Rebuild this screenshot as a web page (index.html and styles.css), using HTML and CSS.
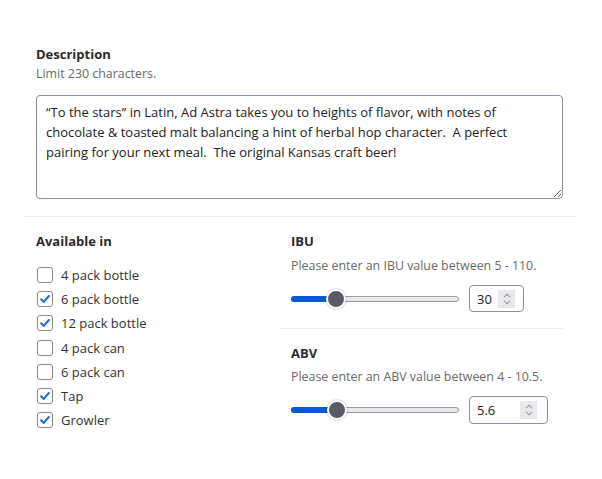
FILE: index.html
```html
<!DOCTYPE html>
<html lang="en">
<head>
<meta charset="utf-8">
<title>Beer details</title>
<link rel="stylesheet" href="styles.css">
</head>
<body>
<div class="form">
  <section class="desc">
    <div class="label">Description</div>
    <div class="help">Limit 230 characters.</div>
    <textarea class="textarea">“To the stars” in Latin, Ad Astra takes you to heights of flavor, with notes of chocolate &amp; toasted malt balancing a hint of herbal hop character.  A perfect pairing for your next meal.  The original Kansas craft beer!</textarea>
  </section>
  <div class="cols">
    <section class="avail">
      <div class="label">Available in</div>
      <ul class="checks">
        <li class="check"><span class="box"></span>4 pack bottle</li>
        <li class="check on"><span class="box"><svg viewBox="0 0 16 16"><path d="M3.6 8.4 L6.6 11.3 L12.4 4.6"/></svg></span>6 pack bottle</li>
        <li class="check on"><span class="box"><svg viewBox="0 0 16 16"><path d="M3.6 8.4 L6.6 11.3 L12.4 4.6"/></svg></span>12 pack bottle</li>
        <li class="check"><span class="box"></span>4 pack can</li>
        <li class="check"><span class="box"></span>6 pack can</li>
        <li class="check on"><span class="box"><svg viewBox="0 0 16 16"><path d="M3.6 8.4 L6.6 11.3 L12.4 4.6"/></svg></span>Tap</li>
        <li class="check on"><span class="box"><svg viewBox="0 0 16 16"><path d="M3.6 8.4 L6.6 11.3 L12.4 4.6"/></svg></span>Growler</li>
      </ul>
    </section>
    <div class="right">
      <section class="range first">
        <div class="label">IBU</div>
        <div class="help gap">Please enter an IBU value between 5 - 110.</div>
        <div class="row">
          <div class="slider">
            <div class="track"></div>
            <div class="fill" style="width: 45px"></div>
            <div class="thumb" style="left: 45px"></div>
          </div>
          <div class="num small"><span class="val">30</span><span class="spin"><svg viewBox="0 0 16 18"><path d="M4.5 7 L8 3.5 L11.5 7 M4.5 11 L8 14.5 L11.5 11"/></svg></span></div>
        </div>
      </section>
      <section class="range">
        <div class="label">ABV</div>
        <div class="help gap2">Please enter an ABV value between 4 - 10.5.</div>
        <div class="row row2">
          <div class="slider">
            <div class="track"></div>
            <div class="fill" style="width: 46px"></div>
            <div class="thumb" style="left: 46px"></div>
          </div>
          <div class="num wide"><span class="val">5.6</span><span class="spin"><svg viewBox="0 0 16 18"><path d="M4.5 7 L8 3.5 L11.5 7 M4.5 11 L8 14.5 L11.5 11"/></svg></span></div>
        </div>
      </section>
    </div>
  </div>
</div>
</body>
</html>
```
FILE: styles.css
```css
* { box-sizing: border-box; }
html, body { margin: 0; padding: 0; background: #fff; }
body {
  font-family: "Open Sans", "Noto Sans", "Liberation Sans", sans-serif;
  color: #333;
  font-size: 13px;
}
.form { margin-left: 24px; width: 551px; }
.desc {
  padding: 44px 12px 17px;
  border-bottom: 1px solid #ececec;
}
.label { font-size: 13px; font-weight: 700; line-height: 20px; color: #2b2b2b; }
.help { font-size: 12.4px; line-height: 20px; color: #6a6a6a; }
.textarea {
  display: block;
  margin-top: 11px;
  width: 527px;
  height: 104px;
  border: 1px solid #8f8f9d;
  border-radius: 4px;
  padding: 6px 22px 6px 9px;
  font-family: inherit;
  font-size: 13px;
  line-height: 20px;
  color: #222;
  resize: both;
  outline: none;
}
.cols { display: flex; }
.avail { width: 256px; padding: 14px 0 0 12px; }
.checks { list-style: none; margin: 12px 0 0; padding: 0; }
.check {
  display: flex;
  align-items: center;
  height: 24.17px;
  font-size: 13px;
  color: #333;
}
.box {
  width: 16px; height: 16px;
  border: 1px solid #8a8a8a;
  border-radius: 3px;
  margin: 0 8px 0 1px;
  display: flex; align-items: center; justify-content: center;
  background: #fff;
}
.box svg { width: 14px; height: 14px; fill: none; stroke: #1f6fd1; stroke-width: 2.4; stroke-linecap: round; stroke-linejoin: round; }
.right { width: 283px; }
.range { padding: 14px 0 16px 11px; }
.range.first { border-bottom: 1px solid #ececec; }
.gap { margin-top: 5px; }
.gap2 { margin-top: 4px; }
.row { display: flex; align-items: center; margin-top: 9px; height: 27px; }
.row2 { height: 28px; }
.slider { position: relative; width: 168px; height: 20px; margin-right: 10px; }
.track {
  position: absolute; left: 0; right: 0; top: 7px; height: 6px;
  background: #e9e9ed; border: 1px solid #9a9aa4; border-radius: 3px;
}
.fill {
  position: absolute; left: 0; top: 7px; height: 6px;
  background: #0b5ad4; border-radius: 3px 0 0 3px;
}
.thumb {
  position: absolute; top: 0; width: 20px; height: 20px; margin-left: -10px;
  border-radius: 50%; background: #5b5b66; border: 2px solid #fff;
  box-shadow: 0 0 2px rgba(0,0,0,0.35);
}
.num {
  height: 100%;
  border: 1px solid #8f8f9d;
  border-radius: 4px;
  display: flex; align-items: center; justify-content: space-between;
  padding: 0 8px 0 7px;
  background: #fff;
}
.num.small { width: 55px; }
.num.wide { width: 79px; padding-right: 10px; }
.val { font-size: 13px; color: #222; }
.spin {
  width: 17px; height: 18px; background: #e9e9ed;
  display: flex; align-items: center; justify-content: center;
}
.spin svg { width: 14px; height: 16px; fill: none; stroke: #8a8a93; stroke-width: 1.2; }
```
